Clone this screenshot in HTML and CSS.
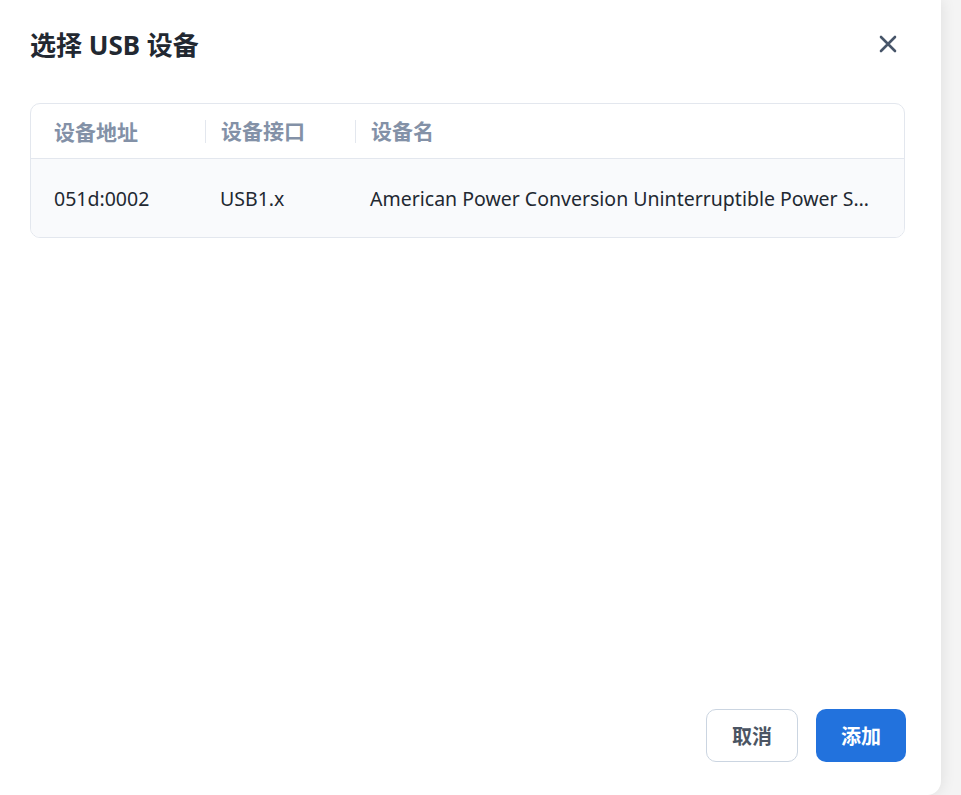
FILE: index.html
```html
<!DOCTYPE html>
<html lang="zh-CN">
<head>
  <meta charset="UTF-8" />
  <meta name="viewport" content="width=device-width, initial-scale=1.0"/>
  <title>选择 USB 设备</title>
  <link rel="stylesheet" href="styles.css">
</head>
<body>
  <div class="dialog">
    <div class="dialog-head">
      <h2>选择 USB 设备</h2>
      <button class="close" type="button" aria-label="关闭">
        <svg width="18" height="18" viewBox="0 0 18 18"><path d="M2 2L16 16M16 2L2 16" stroke="#475569" stroke-width="2.6" stroke-linecap="round"/></svg>
      </button>
    </div>

    <div class="device-table">
      <div class="row head">
        <div class="cell c1">设备地址</div>
        <div class="cell c2">设备接口</div>
        <div class="cell c3">设备名</div>
      </div>
      <div class="row item">
        <div class="cell c1">051d:0002</div>
        <div class="cell c2">USB1.x</div>
        <div class="cell c3">American Power Conversion Uninterruptible Power Supply</div>
      </div>
    </div>

    <div class="dialog-foot">
      <button class="btn cancel" type="button">取消</button>
      <button class="btn primary" type="button">添加</button>
    </div>
  </div>
</body>
</html>
```

FILE: styles.css
```css
body {
  margin: 0;
  background: #f4f4f4;
  font-family: "Noto Sans", "Noto Sans CJK SC", sans-serif;
  color: #1f2937;
}
.dialog {
  width: 941px;
  height: 795px;
  background: #fff;
  border-bottom-right-radius: 14px;
  box-shadow: 2px 0 14px rgba(0, 0, 0, 0.08);
  display: flex;
  flex-direction: column;
  box-sizing: border-box;
  padding: 0 35px 33px 30px;
}
.dialog-head {
  display: flex;
  align-items: center;
  justify-content: space-between;
  height: 88px;
}
.dialog-head h2 {
  margin: 0;
  font-size: 26px;
  font-weight: bold;
  color: #222831;
}
.close {
  background: none;
  border: none;
  padding: 0;
  margin-right: 9px;
  width: 18px;
  height: 18px;
  cursor: pointer;
}
.device-table {
  margin-top: 15px;
  margin-right: 1px;
  border: 1px solid #e3e7ee;
  border-radius: 10px;
  overflow: hidden;
}
.row {
  display: flex;
  align-items: center;
}
.row.head {
  height: 54px;
  border-bottom: 1px solid #e3e7ee;
  color: #8391a7;
  font-weight: bold;
  font-size: 21px;
}
.row.item {
  height: 78px;
  background: #f9fafc;
  font-size: 19.5px;
  color: #222831;
}
.cell {
  white-space: nowrap;
  box-sizing: border-box;
}
.row.item .cell {
  overflow: hidden;
  text-overflow: ellipsis;
}
.c1 {
  width: 174px;
  padding-left: 23px;
}
.c2 {
  width: 150px;
  padding-left: 15px;
}
.c3 {
  flex: 1;
  min-width: 0;
  padding-left: 15px;
  padding-right: 32px;
}
.row.head .c2,
.row.head .c3 {
  border-left: 1px solid #e3e7ee;
  line-height: 23px;
}
.dialog-foot {
  margin-top: auto;
  display: flex;
  justify-content: flex-end;
  gap: 18px;
}
.btn {
  height: 53px;
  border-radius: 10px;
  font-family: inherit;
  font-size: 20px;
  font-weight: bold;
  cursor: pointer;
}
.cancel {
  width: 92px;
  background: #fff;
  border: 1px solid #cbd5e1;
  color: #4b5563;
}
.primary {
  width: 90px;
  background: #2272dd;
  border: none;
  color: #fff;
}
```
